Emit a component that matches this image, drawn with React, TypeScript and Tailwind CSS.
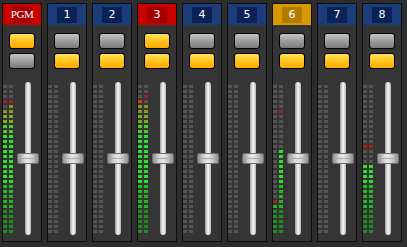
type Head = 'red' | 'blue' | 'orange';
type Meter = { from: number | null; peak: number | null };

interface Channel {
  label: string;
  head: Head;
  top: boolean;
  bottom: boolean;
  meters: [Meter, Meter];
}

const OFF: Meter = { from: null, peak: null };
const ROWS = 30;

const CHANNELS: Channel[] = [
  { label: 'PGM', head: 'red', top: true, bottom: false, meters: [{ from: 5, peak: 3 }, { from: 4, peak: 3 }] },
  { label: '1', head: 'blue', top: false, bottom: true, meters: [OFF, OFF] },
  { label: '2', head: 'blue', top: false, bottom: true, meters: [OFF, OFF] },
  { label: '3', head: 'red', top: true, bottom: true, meters: [{ from: 3, peak: null }, { from: 4, peak: 2 }] },
  { label: '4', head: 'blue', top: false, bottom: true, meters: [OFF, OFF] },
  { label: '5', head: 'blue', top: false, bottom: true, meters: [OFF, OFF] },
  { label: '6', head: 'orange', top: false, bottom: true, meters: [{ from: 24, peak: 23 }, { from: 13, peak: 5 }] },
  { label: '7', head: 'blue', top: false, bottom: true, meters: [OFF, OFF] },
  { label: '8', head: 'blue', top: false, bottom: true, meters: [{ from: 16, peak: 12 }, { from: 16, peak: 12 }] },
];

const HEAD_CLS: Record<Head, [string, string]> = {
  red: ['bg-[#c80000]', 'bg-[#a40000]'],
  blue: ['bg-[#1c3c7a]', 'bg-[#0a2256]'],
  orange: ['bg-[#d69a00]', 'bg-[#b27a00]'],
};

// colour of a lit segment, by row from the top
function ledColor(i: number) {
  if (i <= 3) return '#d0401a';
  if (i <= 5) return '#8d961e';
  if (i <= 7) return '#7aae22';
  if (i <= 9) return '#50c828';
  if (i <= 19) return '#2ee02e';
  if (i <= 24) return '#24b824';
  return '#1c921c';
}

function MeterColumn({ m }: { m: Meter }) {
  return (
    <div className="flex flex-col gap-[2px]">
      {Array.from({ length: ROWS }, (_, i) => {
        let c = '#555555';
        if (m.from !== null && i >= m.from) c = ledColor(i);
        if (m.peak === i) c = '#a82424';
        return <div key={i} className="w-[4px] h-[3px]" style={{ background: c }} />;
      })}
    </div>
  );
}

function Button({ on }: { on: boolean }) {
  return (
    <div
      className={`w-[26px] h-[16px] rounded-[3px] border border-black ${
        on
          ? 'bg-[linear-gradient(to_bottom,#ffe25a,#ffc21a_55%,#ffa800)]'
          : 'bg-[linear-gradient(to_bottom,#c4c4c4,#9a9a9a_55%,#7a7a7a)]'
      }`}
    />
  );
}

function Strip({ ch }: { ch: Channel }) {
  const [outer, inner] = HEAD_CLS[ch.head];
  return (
    <div className="w-[40px] h-[239px] border border-[#0d0d0d] bg-[#353535] flex flex-col">
      <div className={`h-[21px] flex justify-center items-center ${outer}`}>
        <div
          className={`w-[20px] h-[16px] flex items-center justify-center text-white text-[11px] leading-none ${inner} ${
            ch.label === 'PGM'
              ? "font-['Liberation_Serif',serif] tracking-[-0.5px]"
              : "font-['DejaVu_Sans',sans-serif]"
          }`}
        >
          {ch.label}
        </div>
      </div>

      <div className="mt-[8px] flex flex-col items-center gap-[4px]">
        <Button on={ch.top} />
        <Button on={ch.bottom} />
      </div>

      <div className="flex flex-row">
        <div className="flex gap-[2px] pt-[16px]">
          <MeterColumn m={ch.meters[0]} />
          <MeterColumn m={ch.meters[1]} />
        </div>
        <div className="relative w-[22px] ml-[4px] pt-[13px]">
          <div className="mx-auto w-[6px] h-[153px] rounded-full bg-[linear-gradient(to_right,#9c9c9c,#e6e6e6_40%,#f4f4f4_55%,#b4b4b4)]" />
          <div className="absolute left-0 top-[84px] w-[22px] h-[11px] rounded-[2px] border border-[#6e6e6e] bg-[linear-gradient(to_right,#8c8c8c,#d6d6d6_30%,#e8e8e8_50%,#cfcfcf_70%,#8c8c8c)]">
            <div className="mt-[4px] h-px bg-[#a8a8a8]" />
          </div>
        </div>
      </div>
    </div>
  );
}

export default function App() {
  return (
    <div className="w-[407px] h-[247px] bg-[#2d2d2d] flex gap-[5px] pl-[2px] pt-[3px] overflow-hidden">
      {CHANNELS.map(ch => (
        <Strip key={ch.label} ch={ch} />
      ))}
    </div>
  );
}
